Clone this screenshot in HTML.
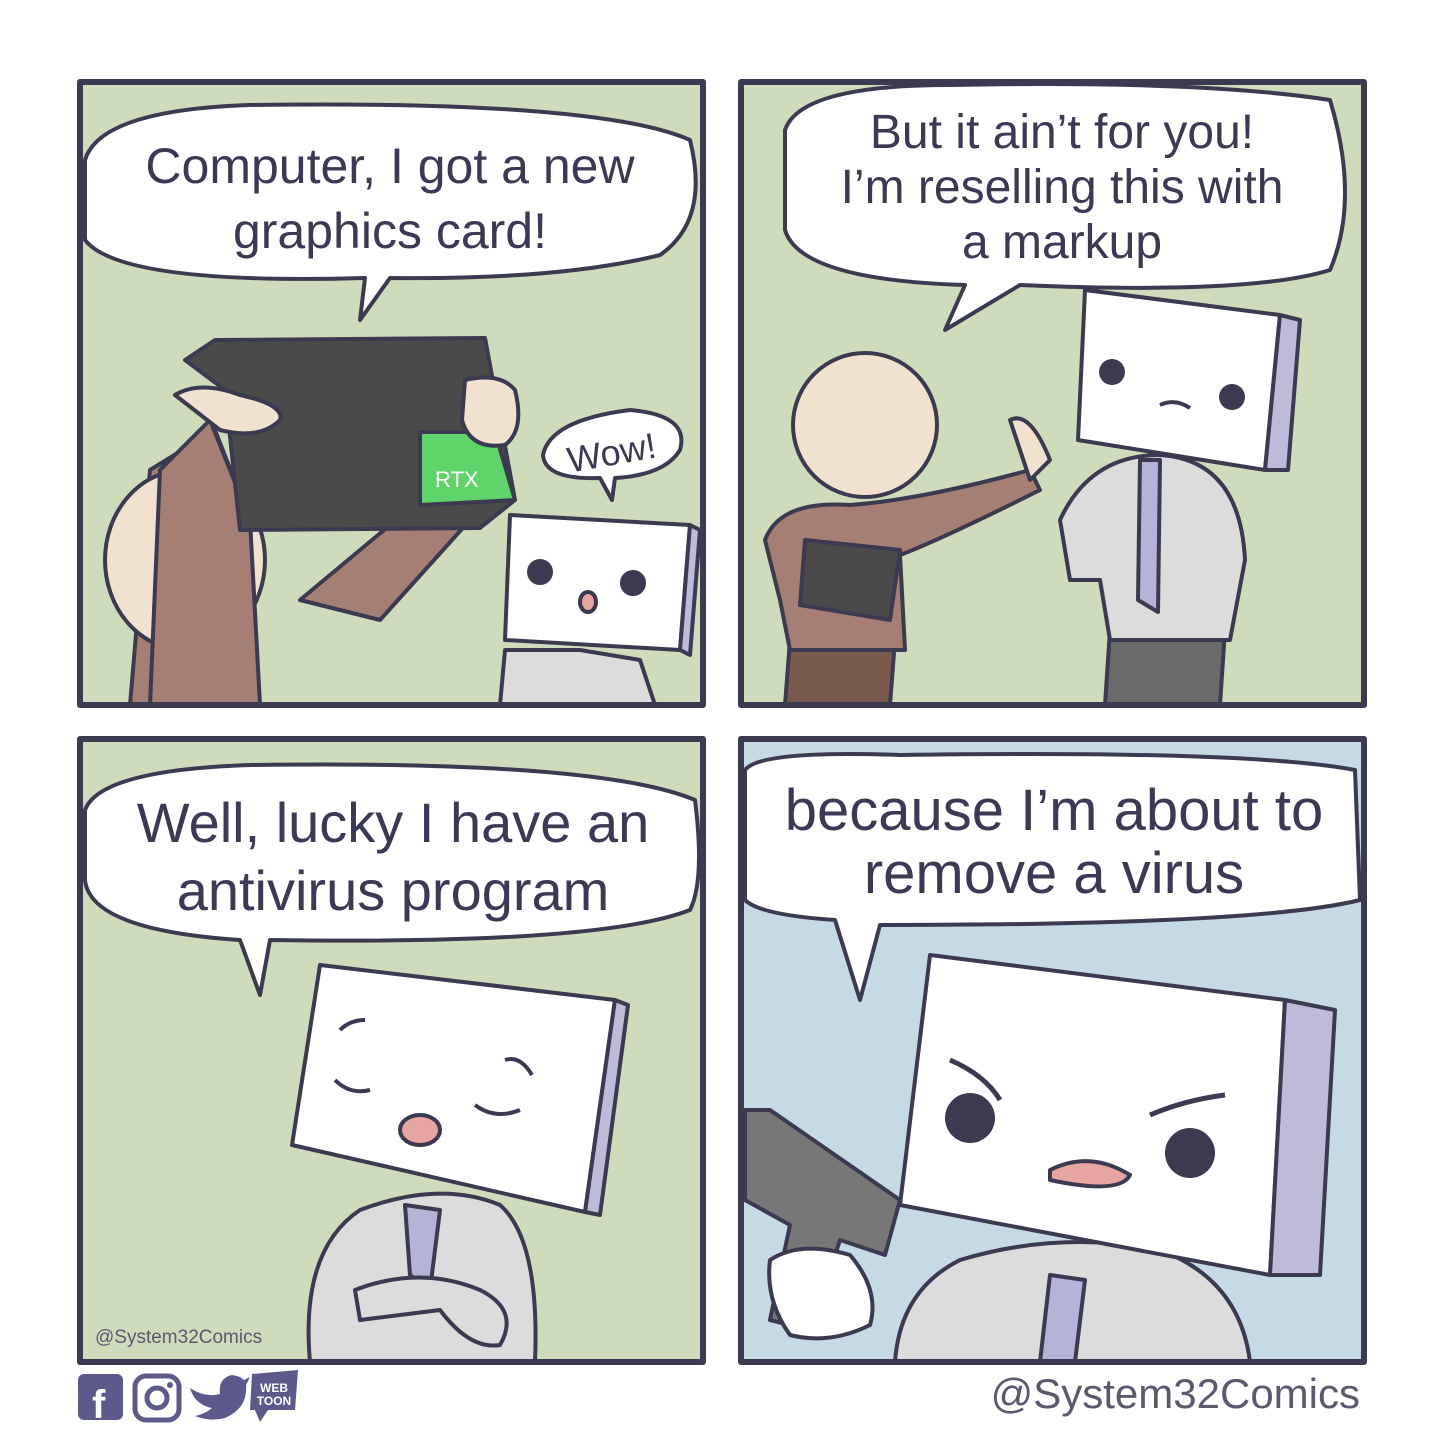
<!DOCTYPE html>
<html><head><meta charset="utf-8"><style>
html,body{margin:0;padding:0;background:#fff;width:1444px;height:1444px;overflow:hidden}
svg{display:block}
text{font-family:"Liberation Sans",sans-serif;fill:#3b3a55}
</style></head><body>
<svg width="1444" height="1444" viewBox="0 0 1444 1444">
<defs>
<clipPath id="c1"><rect x="80" y="82" width="623" height="623"/></clipPath>
<clipPath id="c2"><rect x="741" y="82" width="623" height="623"/></clipPath>
<clipPath id="c3"><rect x="80" y="739" width="623" height="623"/></clipPath>
<clipPath id="c4"><rect x="741" y="739" width="623" height="623"/></clipPath>
</defs>
<g stroke="#3b3a50" stroke-width="4" stroke-linejoin="round">
<!-- panel 1 -->
<g clip-path="url(#c1)">
<rect x="80" y="82" width="623" height="623" fill="#cfdcbc" stroke="none"/>
<path d="M130 705 L150 470 L215 430 L250 520 L240 610 L250 705Z" fill="#a57e74"/>
<ellipse cx="185" cy="560" rx="80" ry="90" fill="#f1e2d0"/>
<path d="M150 705 L160 470 L210 420 L250 520 L260 705Z" fill="#a57e74"/>
<path d="M300 600 L420 500 L470 520 L380 620Z" fill="#a57e74"/>
<path d="M185 360 L215 340 L485 338 L515 500 L480 528 L240 530 L225 390Z" fill="#4a4a4a"/>
<path d="M420 432 L495 432 L515 500 L420 505Z" fill="#5fd46a"/>
<text x="435" y="487" font-size="22" style="fill:#fff" stroke="none">RTX</text>
<path d="M175 395 Q200 380 240 395 Q285 405 280 420 Q260 440 220 430 Z" fill="#f1e2d0"/>
<path d="M465 380 Q500 372 515 390 Q525 430 505 445 Q470 450 462 420Z" fill="#f1e2d0"/>
<path d="M510 515 L690 525 L680 650 L505 640Z" fill="#fff"/>
<path d="M690 525 L700 530 L690 655 L680 650Z" fill="#bdbbd9"/>
<path d="M500 705 L505 650 L580 650 L640 660 L655 705Z" fill="#dcdcdc"/>
<circle cx="540" cy="572" r="11" fill="#3b3a50"/><circle cx="633" cy="583" r="11" fill="#3b3a50"/>
<ellipse cx="588" cy="602" rx="8" ry="10" fill="#e6a5a0"/>
<path d="M85 160 Q100 110 250 105 Q600 100 690 140 Q710 220 660 255 Q560 280 390 278 L360 320 L365 278 Q120 285 85 240Z" fill="#fff"/>
<path d="M543 455 Q550 420 630 410 Q690 415 680 450 Q665 475 615 478 L612 500 L600 478 Q545 480 543 455Z" fill="#fff"/>
</g>
<rect x="80" y="82" width="623" height="623" fill="none" stroke-width="6"/>
<!-- panel 2 -->
<g clip-path="url(#c2)">
<rect x="741" y="82" width="623" height="623" fill="#cfdcbc" stroke="none"/>
<path d="M785 705 L790 640 L895 640 L890 705Z" fill="#7a5a4c"/>
<path d="M765 540 Q780 500 850 505 Q920 500 1030 470 L1040 490 Q940 540 900 555 L905 650 L790 650 L780 600Z" fill="#a57e74"/>
<circle cx="865" cy="425" r="72" fill="#f1e2d0"/>
<path d="M1010 420 Q1030 410 1050 460 L1030 480 Z" fill="#f1e2d0"/>
<path d="M805 540 L900 550 L890 620 L800 605Z" fill="#4a4a4a"/>
<path d="M1105 705 L1110 630 L1225 630 L1220 705Z" fill="#6a6a6a"/>
<path d="M1060 520 Q1090 455 1160 455 Q1240 460 1245 560 L1230 640 L1110 640 L1100 580 L1070 580Z" fill="#dcdcdc"/>
<path d="M1140 460 L1160 460 L1158 612 L1138 600Z" fill="#b4b3d8"/>
<path d="M1085 290 L1280 315 L1265 470 L1078 440Z" fill="#fff"/>
<path d="M1280 315 L1300 320 L1288 470 L1265 470Z" fill="#bdbbd9"/>
<circle cx="1112" cy="372" r="13" fill="#3b3a50" stroke="none"/><circle cx="1232" cy="397" r="13" fill="#3b3a50" stroke="none"/>
<path d="M1160 405 Q1175 398 1190 408" fill="none"/>
<path d="M785 130 Q800 85 950 85 Q1200 80 1330 100 Q1360 200 1330 270 Q1250 295 1020 285 L945 330 L965 285 Q800 280 785 230Z" fill="#fff"/>
</g>
<rect x="741" y="82" width="623" height="623" fill="none" stroke-width="6"/>
<!-- panel 3 -->
<g clip-path="url(#c3)">
<rect x="80" y="739" width="623" height="623" fill="#cfdcbc" stroke="none"/>
<path d="M310 1362 Q300 1250 360 1210 Q440 1180 500 1205 Q540 1240 535 1362Z" fill="#dcdcdc"/>
<path d="M405 1205 L440 1210 L430 1290 L410 1275Z" fill="#b4b3d8"/>
<path d="M355 1290 Q420 1265 480 1290 Q520 1310 500 1345 Q470 1350 440 1310 L360 1320Z" fill="#dcdcdc"/>
<path d="M320 965 L615 1000 L585 1212 L292 1145Z" fill="#fff"/>
<path d="M615 1000 L628 1005 L600 1215 L585 1212Z" fill="#bdbbd9"/>
<ellipse cx="420" cy="1130" rx="20" ry="15" fill="#e6a5a0"/>
<path d="M335 1080 Q350 1095 370 1090 M475 1105 Q495 1120 520 1110 M340 1030 Q350 1020 365 1020 M505 1060 Q520 1055 532 1075" fill="none"/>
<path d="M85 810 Q100 770 250 765 Q600 760 695 800 Q705 880 690 910 Q600 945 270 940 L260 995 L240 940 Q90 930 85 880Z" fill="#fff"/>
</g>
<rect x="80" y="739" width="623" height="623" fill="none" stroke-width="6"/>
<!-- panel 4 -->
<g clip-path="url(#c4)">
<rect x="741" y="739" width="623" height="623" fill="#c5dae4" stroke="none"/>
<path d="M895 1362 Q900 1290 960 1260 Q1060 1230 1160 1250 Q1240 1280 1250 1362Z" fill="#dcdcdc"/>
<path d="M1050 1275 L1085 1280 L1075 1362 L1040 1362Z" fill="#b4b3d8"/>
<path d="M745 1110 L770 1110 L900 1200 L885 1255 L840 1240 L810 1330 L770 1320 L790 1225 L745 1200Z" fill="#777"/>
<path d="M770 1260 Q800 1240 850 1255 Q880 1290 870 1325 Q830 1345 790 1335 Q765 1300 770 1260Z" fill="#fff"/>
<path d="M930 955 L1285 1000 L1270 1275 L900 1205Z" fill="#fff"/>
<path d="M1285 1000 L1335 1010 L1320 1275 L1270 1275Z" fill="#bdbbd9"/>
<circle cx="970" cy="1118" r="25" fill="#3b3a50" stroke="none"/><circle cx="1190" cy="1153" r="25" fill="#3b3a50" stroke="none"/>
<path d="M1050 1170 Q1090 1150 1130 1175 Q1120 1195 1050 1180Z" fill="#e6a5a0"/>
<path d="M950 1060 Q985 1075 1000 1100 M1150 1115 Q1185 1100 1225 1095" fill="none" stroke-width="5"/>
<path d="M745 770 Q760 750 900 755 Q1250 750 1355 770 L1360 900 Q1260 925 880 925 L860 1000 L835 920 Q760 915 745 900Z" fill="#fff"/>
</g>
<rect x="741" y="739" width="623" height="623" fill="none" stroke-width="6"/>
</g>
<g stroke="none">
<text x="390" y="183" font-size="50" text-anchor="middle">Computer, I got a new</text>
<text x="390" y="248" font-size="50" text-anchor="middle">graphics card!</text>
<text x="612" y="465" font-size="36" text-anchor="middle" transform="rotate(-10 612 455)">Wow!</text>
<text x="1062" y="148" font-size="48" text-anchor="middle">But it ain’t for you!</text>
<text x="1062" y="203" font-size="48" text-anchor="middle">I’m reselling this with</text>
<text x="1062" y="258" font-size="48" text-anchor="middle">a markup</text>
<text x="393" y="842" font-size="56" text-anchor="middle">Well, lucky I have an</text>
<text x="393" y="910" font-size="56" text-anchor="middle">antivirus program</text>
<text x="1054" y="830" font-size="58" text-anchor="middle">because I’m about to</text>
<text x="1054" y="893" font-size="58" text-anchor="middle">remove a virus</text>
<text x="95" y="1343" font-size="19" style="fill:#5a596e">@System32Comics</text>
<text x="1360" y="1408" font-size="42" text-anchor="end" style="fill:#5a596e">@System32Comics</text>
<rect x="78" y="1374" width="45" height="46" rx="6" fill="#5b5a8a"/>
<text x="92" y="1418" font-size="40" font-weight="bold" style="fill:#fff">f</text>
<rect x="135" y="1376" width="44" height="44" rx="11" fill="none" stroke="#5b5a8a" stroke-width="5"/>
<circle cx="157" cy="1398" r="10" fill="none" stroke="#5b5a8a" stroke-width="5"/>
<circle cx="170" cy="1385" r="3" fill="#5b5a8a"/>
<path d="M190 1388 Q205 1398 220 1394 Q218 1378 232 1375 Q240 1376 244 1380 L250 1377 L246 1385 Q248 1408 225 1418 Q210 1422 195 1416 Q205 1414 212 1408 Q195 1405 190 1388Z" fill="#5b5a8a"/>
<path d="M252 1374 L298 1370 L295 1410 L268 1410 L260 1422 L255 1410 L250 1410Z" fill="#5b5a8a"/>
<text x="274" y="1392" font-size="12" font-weight="bold" text-anchor="middle" style="fill:#fff">WEB</text>
<text x="274" y="1405" font-size="12" font-weight="bold" text-anchor="middle" style="fill:#fff">TOON</text>
</g>
</svg>
</body></html>
